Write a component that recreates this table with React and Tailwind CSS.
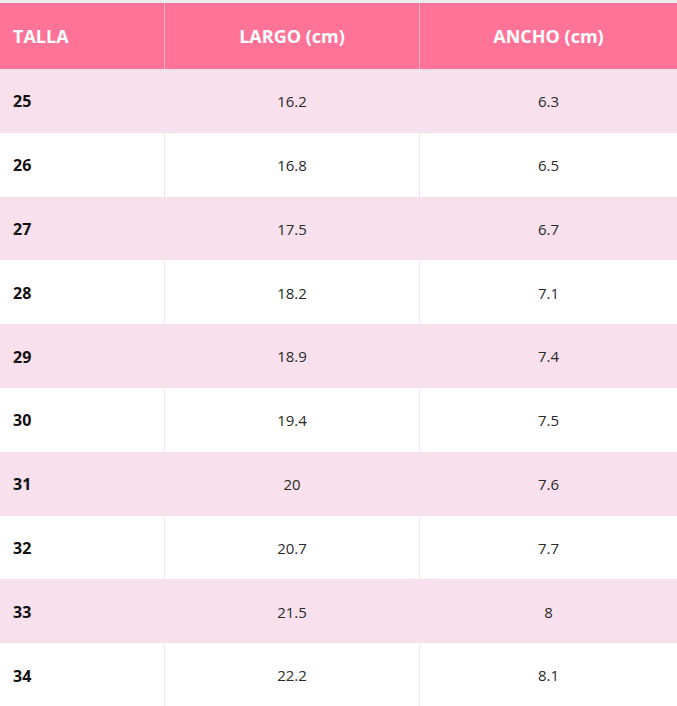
import React from "react";

const rows = [
  ["25", "16.2", "6.3"],
  ["26", "16.8", "6.5"],
  ["27", "17.5", "6.7"],
  ["28", "18.2", "7.1"],
  ["29", "18.9", "7.4"],
  ["30", "19.4", "7.5"],
  ["31", "20", "7.6"],
  ["32", "20.7", "7.7"],
  ["33", "21.5", "8"],
  ["34", "22.2", "8.1"],
];

export default function App() {
  return (
    <div className="w-[677px] h-[706px] overflow-hidden bg-white" style={{ fontFamily: '"Open Sans", "Liberation Sans", sans-serif' }}>
      <div className="h-[3px] bg-[#ececec]" />
      <div className="grid grid-cols-[165px_255px_1fr] h-[66px] bg-[#ff7398] text-white font-bold text-[18px]">
        <div className="flex items-center pl-[13px] border-r border-[#f9b3c7]">TALLA</div>
        <div className="flex items-center justify-center border-r border-[#f9b3c7]">LARGO (cm)</div>
        <div className="flex items-center justify-center">ANCHO (cm)</div>
      </div>
      {rows.map((r, i) => (
        <div
          key={r[0]}
          className={`grid grid-cols-[165px_255px_1fr] h-[63.8px] pt-[1px] ${i % 2 === 0 ? "bg-[#f8e0ec]" : "bg-white"}`}
        >
          <div className="flex items-center pl-[13px] border-r border-[#f8e1ec] font-bold text-[16px] text-[#111111]">
            {r[0]}
          </div>
          <div className="flex items-center justify-center border-r border-[#f8e1ec] text-[15px] text-[#2a2a2a]">
            {r[1]}
          </div>
          <div className="flex items-center justify-center text-[15px] text-[#2a2a2a]">{r[2]}</div>
        </div>
      ))}
    </div>
  );
}
